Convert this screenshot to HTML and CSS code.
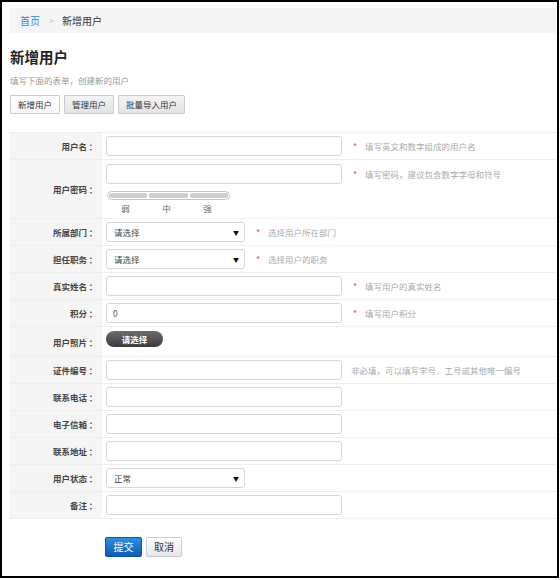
FILE: index.html
```html
<!DOCTYPE html>
<html lang="zh">
<head>
<meta charset="utf-8">
<title>新增用户</title>
<link rel="stylesheet" href="styles.css">
</head>
<body>
<div class="frame">
  <div class="crumb"><a class="crumb-link">首页</a><span class="crumb-sep">&gt;</span><span class="crumb-cur">新增用户</span></div>
  <h1 class="title">新增用户</h1>
  <p class="subtitle">填写下面的表单，创建新的用户</p>
  <div class="tabs">
    <button class="tab tab-active">新增用户</button>
    <button class="tab">管理用户</button>
    <button class="tab">批量导入用户</button>
  </div>
  <table class="form">
    <tr>
      <th>用户名<span class="colon">：</span></th>
      <td><div class="line"><input class="inp" type="text"><span class="star">*</span><span class="hint">填写英文和数字组成的用户名</span></div></td>
    </tr>
    <tr class="pwd">
      <th>用户密码<span class="colon">：</span></th>
      <td>
        <div class="line"><input class="inp" type="password"><span class="star">*</span><span class="hint">填写密码，建议包含数字字母和符号</span></div>
        <div class="strength"><span></span><span></span><span></span></div>
        <div class="strength-labels"><span>弱</span><span>中</span><span>强</span></div>
      </td>
    </tr>
    <tr>
      <th>所属部门<span class="colon">：</span></th>
      <td><div class="line"><div class="sel"><span>请选择</span><span class="arrow">▼</span></div><span class="star">*</span><span class="hint">选择用户所在部门</span></div></td>
    </tr>
    <tr>
      <th>担任职务<span class="colon">：</span></th>
      <td><div class="line"><div class="sel"><span>请选择</span><span class="arrow">▼</span></div><span class="star">*</span><span class="hint">选择用户的职务</span></div></td>
    </tr>
    <tr>
      <th>真实姓名<span class="colon">：</span></th>
      <td><div class="line"><input class="inp" type="text"><span class="star">*</span><span class="hint">填写用户的真实姓名</span></div></td>
    </tr>
    <tr>
      <th>积分<span class="colon">：</span></th>
      <td><div class="line"><input class="inp" type="text" value="0"><span class="star">*</span><span class="hint">填写用户积分</span></div></td>
    </tr>
    <tr class="photo">
      <th>用户照片<span class="colon">：</span></th>
      <td><button class="pill">请选择</button></td>
    </tr>
    <tr>
      <th>证件编号<span class="colon">：</span></th>
      <td><div class="line"><input class="inp" type="text"><span class="hint hint-plain">非必填，可以填写学号、工号或其他唯一编号</span></div></td>
    </tr>
    <tr>
      <th>联系电话<span class="colon">：</span></th>
      <td><div class="line"><input class="inp" type="text"></div></td>
    </tr>
    <tr>
      <th>电子信箱<span class="colon">：</span></th>
      <td><div class="line"><input class="inp" type="text"></div></td>
    </tr>
    <tr>
      <th>联系地址<span class="colon">：</span></th>
      <td><div class="line"><input class="inp" type="text"></div></td>
    </tr>
    <tr>
      <th>用户状态<span class="colon">：</span></th>
      <td><div class="line"><div class="sel"><span>正常</span><span class="arrow">▼</span></div></div></td>
    </tr>
    <tr>
      <th>备注<span class="colon">：</span></th>
      <td><div class="line"><input class="inp" type="text"></div></td>
    </tr>
  </table>
  <div class="actions">
    <button class="btn-submit">提交</button>
    <button class="btn-cancel">取消</button>
  </div>
</div>
</body>
</html>
```
FILE: styles.css
```css
* { box-sizing: border-box; }
html, body { margin: 0; padding: 0; background: #fff; }
body { font-family: "Noto Sans CJK SC", "Noto Sans", sans-serif; color: #333; }

.frame {
  width: 559px;
  height: 578px;
  border: 2px solid #000;
  padding: 6px 0 0 8px;
}

.crumb {
  height: 25px;
  line-height: 25px;
  background: #f5f5f5;
  padding-left: 10px;
  font-size: 10px;
  display: flex;
  align-items: center;
}
.crumb-link { color: #2a8ad2; }
.crumb-sep { color: #bbb; margin: 0 8px 0 9px; font-size: 9px; }
.crumb-cur { color: #333; }

.title {
  margin: 14px 0 0;
  font-size: 14.5px;
  line-height: 20px;
  font-weight: bold;
  color: #222;
}
.subtitle {
  margin: 7px 0 0;
  font-size: 8.5px;
  line-height: 12px;
  color: #999;
}

.tabs { display: flex; gap: 4px; margin-top: 9px; }
.tab {
  height: 19px;
  padding: 0 7px;
  font-family: inherit;
  font-size: 8.5px;
  color: #333;
  border: 1px solid #ccc;
  border-radius: 1px;
  background: linear-gradient(#f4f4f4, #e3e3e3);
  line-height: 17px;
}
.tab-active { background: linear-gradient(#fff, #f6f6f6); }

.form {
  margin-top: 18px;
  width: 547px;
  border-collapse: separate;
  border-spacing: 0;
}
.form th, .form td {
  box-sizing: content-box;
  height: 26px;
  border-bottom: 1px solid #eee;
  vertical-align: middle;
}
.form tr:first-child th, .form tr:first-child td { border-top: 1px solid #eee; }
.form th {
  width: 88px;
  background: #f5f5f5;
  text-align: right;
  font-size: 8.5px;
  font-weight: bold;
  color: #444;
  padding: 0 4px 0 0;
}
.colon { display: inline-block; width: 10px; text-align: center; margin-left: 1px; }
.form td { padding: 0 0 0 4px; }
.line { display: flex; align-items: center; }
.inp {
  width: 236px;
  height: 20px;
  border: 1px solid #d6d6d6;
  border-radius: 3px;
  padding: 0 6px;
  font-family: inherit;
  font-size: 8.5px;
  color: #555;
  outline: none;
}
.sel {
  width: 139px;
  height: 20px;
  border: 1px solid #d6d6d6;
  border-radius: 3px;
  padding: 0 5px 0 7px;
  display: flex;
  align-items: center;
  justify-content: space-between;
  font-size: 8.5px;
  color: #444;
}
.arrow { font-size: 6px; color: #111; }
.star { color: #e55; font-size: 9px; margin-left: 11px; width: 12px; }
.hint { color: #aaa; font-size: 8.5px; }
.hint-plain { margin-left: 9px; }

.pwd td { padding-top: 4px; padding-bottom: 1px; height: auto; }
.pwd th { height: auto; }
.strength {
  margin: 7px 0 0 1px;
  width: 123px;
  height: 9px;
  border: 1px solid #c4c4c4;
  border-radius: 5px;
  padding: 1px;
  display: flex;
  gap: 2px;
}
.strength span { flex: 1; background: #cfcfcf; border-radius: 2px; }
.strength-labels {
  width: 123px;
  margin-left: 1px;
  display: flex;
  height: 17px;
  line-height: 17px;
  font-size: 8.5px;
  color: #666;
}
.strength-labels span { flex: 1; text-align: center; padding-right: 4px; }

.photo th, .photo td { height: 29px; }
.pill {
  width: 57px;
  height: 16px;
  border: none;
  border-radius: 8px;
  background: linear-gradient(#6d6d6d, #3a3a3a);
  color: #fff;
  font-family: inherit;
  font-weight: bold;
  font-size: 8.5px;
  line-height: 16px;
  padding: 0;
  display: block;
  margin-top: -6px;
}

.actions { margin: 18px 0 0 95px; display: flex; gap: 4px; }
.btn-submit, .btn-cancel {
  height: 20px;
  font-family: inherit;
  font-size: 10px;
  border-radius: 2px;
  padding: 0;
  line-height: 18px;
}
.btn-submit {
  width: 37px;
  color: #fff;
  border: 1px solid #0a57a8;
  background: linear-gradient(#2d8fe2, #0b5db2);
}
.btn-cancel {
  width: 36px;
  color: #333;
  border: 1px solid #ccc;
  background: linear-gradient(#fff, #e6e6e6);
}
```
